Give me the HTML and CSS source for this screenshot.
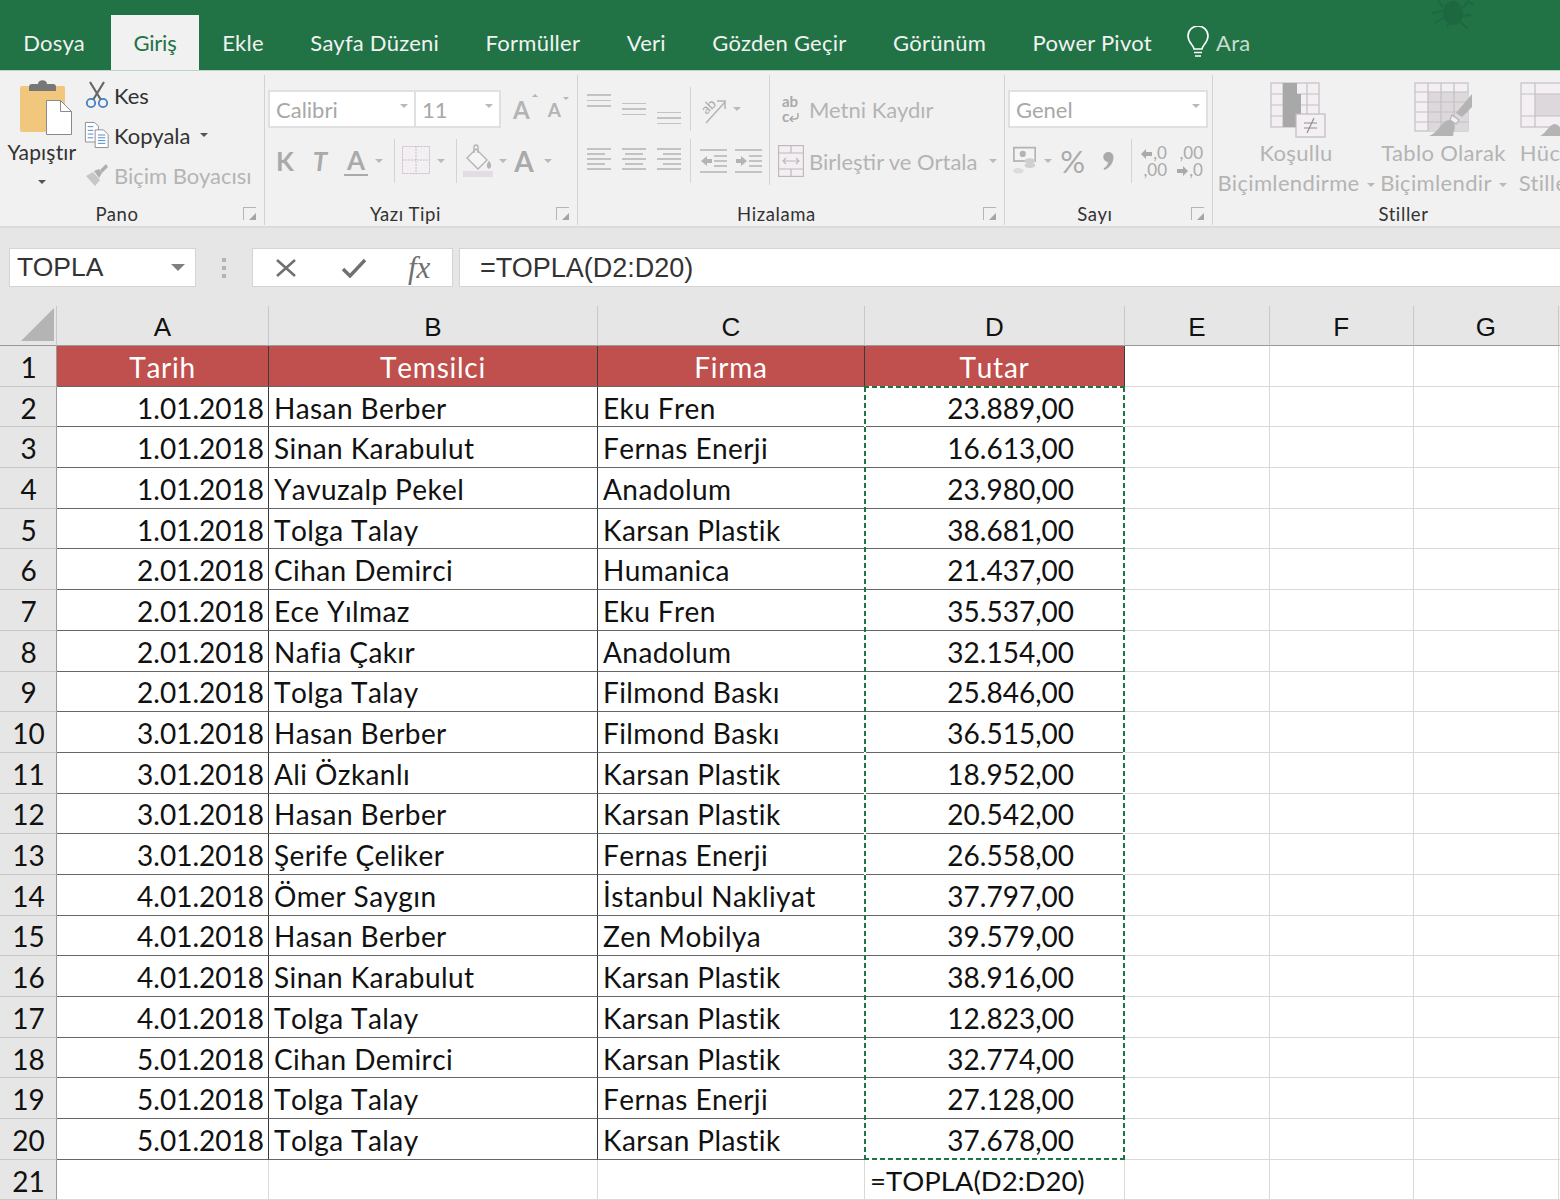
FILE: index.html
```html
<!DOCTYPE html>
<html lang="tr">
<head>
  <meta charset="UTF-8">
  <meta name="viewport" content="width=device-width, initial-scale=1.0">
  <title>Excel - TOPLA</title>
  <link rel="stylesheet" href="styles.css">
</head>
<body>

  <!-- sekmeler -->
  <div class="tabs">
    <div class="tab">Dosya</div>
    <div class="tab active">Giriş</div>
    <div class="tab">Ekle</div>
    <div class="tab">Sayfa Düzeni</div>
    <div class="tab">Formüller</div>
    <div class="tab">Veri</div>
    <div class="tab">Gözden Geçir</div>
    <div class="tab">Görünüm</div>
    <div class="tab">Power Pivot</div>
    <div class="tab search">
      <svg width="24" height="34" viewBox="0 0 24 34" fill="none" stroke="#fff" stroke-width="1.6"><path d="M8 23c0-4-6-6-6-13a10 10 0 0 1 20 0c0 7-6 9-6 13z"/><path d="M8 26.500h8M9 30h6"/></svg>
      <span>Ara</span>
    </div>
    <svg class="crab" width="46" height="30" viewBox="0 0 46 30" fill="none" stroke="#1d6840" stroke-width="2"><ellipse cx="24" cy="13" rx="9" ry="11" fill="#1d6840"/><path d="M15 11 3 13M16 17 6 23M33 16l9-1M30 21l9 8M34 8l5-7 5 4M14 7 9 0M20 23l-2 5"/></svg>
  </div>

  <!-- serit -->
  <div class="ribbon">

    <div class="group pano">
      <div class="group-body">
        <div class="paste">
          <svg width="52" height="55" viewBox="0 0 52 55">
            <rect x="0" y="6" width="45" height="46" rx="2" fill="#f0c77c"/>
            <path d="M9 7c0-2 1-3 3-3h6c0-5 9-5 9 0h6c2 0 3 1 3 3v4H9z" fill="#777"/>
            <path d="M26.500 20.500h14l11 11v23h-25z" fill="#fff" stroke="#8a8a8a"/>
            <path d="M40.500 20.500v11h11" fill="none" stroke="#8a8a8a"/>
          </svg>
          <span class="paste-label">Yapıştır</span>
          <i class="caret dark"></i>
        </div>
        <div class="clip-list">
          <div class="clip-row">
            <svg width="24" height="28" viewBox="0 0 24 28" fill="none"><path d="M5 1l11 18M19 1L8 19" stroke="#666" stroke-width="2.200"/><circle cx="6" cy="22" r="4.200" stroke="#3f7fc1" stroke-width="1.800"/><circle cx="18" cy="22" r="4.200" stroke="#3f7fc1" stroke-width="1.800"/></svg>
            <span>Kes</span>
          </div>
          <div class="clip-row">
            <svg width="28" height="30" viewBox="0 0 28 30" fill="#fff" stroke="#8a8a8a"><path d="M1.500 1.500h10l4 4v17h-14z"/><path d="M12 9.500h9l5 5v14H12z"/><path d="M4 6h6M4 10h6M4 14h6M4 18h6" stroke="#4a86c5"/><path d="M15 15h8M15 18h8M15 21h8M15 24h8" stroke="#4a86c5"/></svg>
            <span>Kopyala</span>
            <i class="caret dark"></i>
          </div>
          <div class="clip-row off">
            <svg width="24" height="24" viewBox="0 0 24 24" fill="#c9c6ca"><path d="M1 13l7-4 7 8-5 6z"/><path d="M9 8l5-2 3 4-3 5z" fill="#b0aeb0"/><path d="M15 7l6-6 2 3-6 6z" fill="#b0aeb0"/></svg>
            <span>Biçim Boyacısı</span>
          </div>
        </div>
      </div>
      <div class="group-label">Pano<i class="launcher"></i></div>
    </div>

    <div class="group font">
      <div class="group-body stack">
        <div class="tool-row">
          <div class="combo font-name">Calibri<i class="caret"></i></div>
          <div class="combo font-size">11<i class="caret"></i></div>
          <span class="grow big">A<i class="up"></i></span>
          <span class="grow small">A<i class="down"></i></span>
        </div>
        <div class="tool-row second">
          <b class="fmt bold">K</b>
          <b class="fmt ital">T</b>
          <b class="fmt und">A</b>
          <i class="caret"></i>
          <i class="sep"></i>
          <svg class="borders" width="28" height="30" viewBox="0 0 28 30" fill="#f3eff3" stroke="#c4c0c4" stroke-dasharray="2 1"><rect x=".5" y=".5" width="27" height="27"/><path d="M14 0v28M0 14h28"/></svg>
          <i class="caret"></i>
          <i class="sep"></i>
          <svg class="fill" width="30" height="34" viewBox="0 0 30 34" fill="#f5f5f5" stroke="#b4b4b4" stroke-width="1.400"><path d="M13 5l11 11-9 9-11-11z"/><path d="M11 9V3a2 2 0 0 1 4 0v6" fill="none"/><path d="M26 18c2 3 2 5 0 6-2-1-2-3 0-6z" fill="#b4b4b4"/><rect x="0" y="27" width="30" height="6" fill="#e2dde2" stroke="none"/></svg>
          <i class="caret"></i>
          <b class="fmt color">A</b>
          <i class="caret"></i>
        </div>
      </div>
      <div class="group-label">Yazı Tipi<i class="launcher"></i></div>
    </div>

    <div class="group align">
      <div class="group-body split">
        <div class="stack">
          <div class="tool-row">
            <span class="lines valign top"><i></i><i></i><i></i></span>
            <span class="lines valign mid"><i></i><i></i><i></i></span>
            <span class="lines valign bot"><i></i><i></i><i></i></span>
            <i class="sep"></i>
            <svg class="orient" width="27" height="30" viewBox="0 0 27 30" fill="none" stroke="#b4b4b4" stroke-width="1.500"><path d="M6 29 25 8M17 7h8v8"/><text x="2" y="18" transform="rotate(-45 8 14)" font-family="Lato, sans-serif" font-size="14" fill="#aaa" stroke="none">ab</text></svg>
            <i class="caret"></i>
          </div>
          <div class="tool-row second">
            <span class="lines halign left"><i></i><i></i><i></i><i></i><i></i></span>
            <span class="lines halign center"><i></i><i></i><i></i><i></i><i></i></span>
            <span class="lines halign right"><i></i><i></i><i></i><i></i><i></i></span>
            <i class="sep"></i>
            <svg class="indent" width="27" height="26" viewBox="0 0 27 26" fill="none" stroke="#b4b4b4" stroke-width="1.500"><path d="M0 2h27M0 24h27M14 8h13M14 13h13M14 18h13"/><path d="M1 13l6-5v3h5v4H7v3z" fill="#b4b4b4" stroke="none"/></svg>
            <svg class="indent" width="27" height="26" viewBox="0 0 27 26" fill="none" stroke="#b4b4b4" stroke-width="1.500"><path d="M0 2h27M0 24h27M14 8h13M14 13h13M14 18h13"/><path d="M12 13 6 8v3H1v4h5v3z" fill="#b4b4b4" stroke="none"/></svg>
          </div>
        </div>
        <div class="stack wrap-col">
          <div class="tool-row off-label">
            <span class="abc">ab<br>c<svg width="10" height="10" viewBox="0 0 10 10" fill="none" stroke="#aaa" stroke-width="1.500"><path d="M9 1v3a3 3 0 0 1-3 3H1M4 4 1 7l3 3"/></svg></span>
            <span>Metni Kaydır</span>
          </div>
          <div class="tool-row second off-label merge">
            <svg width="26" height="32" viewBox="0 0 26 32" fill="#f3eff3" stroke="#c0b8bc" stroke-width="1.200"><rect x=".6" y=".6" width="24.800" height="30.800"/><path d="M0 8h26M0 24h26M13 0v8M13 24v8"/><path d="M5 16h16M8 13l-3 3 3 3M18 13l3 3-3 3" fill="none"/></svg>
            <span>Birleştir ve Ortala</span>
            <i class="caret"></i>
          </div>
        </div>
      </div>
      <div class="group-label">Hizalama<i class="launcher"></i></div>
    </div>

    <div class="group number">
      <div class="group-body stack">
        <div class="tool-row">
          <div class="combo genel">Genel<i class="caret"></i></div>
        </div>
        <div class="tool-row second">
          <svg class="money" width="26" height="32" viewBox="0 0 26 32"><rect x="1" y="1" width="24" height="15" fill="#f3f3f3" stroke="#b4b4b4" stroke-width="2"/><circle cx="11" cy="8" r="3.500" fill="#b4b4b4"/><ellipse cx="19" cy="16" rx="6" ry="3" fill="#cfcfcf"/><ellipse cx="19" cy="21" rx="6" ry="3" fill="#cfcfcf"/><ellipse cx="6" cy="27" rx="6" ry="3" fill="#dcdcdc"/></svg>
          <i class="caret"></i>
          <span class="pct">%</span>
          <svg class="comma" width="11" height="20" viewBox="0 0 11 20" fill="#aaa"><path d="M5.500 1a5 5 0 0 1 5 5c0 6-4 11-9 13l-1-1.500c3-2 4.500-4 4.500-6.500a4.500 4.500 0 0 1 .5-10z"/></svg>
          <i class="sep"></i>
          <span class="dec">
            <span><svg width="11" height="10" viewBox="0 0 11 10" fill="#aaa"><path d="M0 5l5-5v3h6v4H5v3z"/></svg>,0</span>
            <span>,00</span>
          </span>
          <span class="dec">
            <span>,00</span>
            <span><svg width="11" height="10" viewBox="0 0 11 10" fill="#aaa"><path d="M11 5 6 0v3H0v4h6v3z"/></svg>,0</span>
          </span>
        </div>
      </div>
      <div class="group-label">Sayı<i class="launcher"></i></div>
    </div>

    <div class="group styles">
      <div class="group-body gallery">
        <div class="style-btn cond">
          <svg width="56" height="56" viewBox="0 0 56 56" fill="#f3eff3" stroke="#c4c0c4" stroke-width="1.200">
            <rect x="1" y="1" width="48" height="44"/>
            <path d="M1 12h48M1 23h48M1 34h48M13 1v44M25 1v44M37 1v44"/>
            <path d="M13 1h14v11h4v22h-4v11H13z" fill="#a9a8a9" stroke="none"/>
            <rect x="26" y="32" width="29" height="23" fill="#f3eff3" stroke="#bfbbbf"/>
            <path d="M34 41h13M34 46h13M44 36l-7 15" fill="none" stroke="#8f8f8f"/>
          </svg>
          <span>Koşullu</span>
          <span>Biçimlendirme<i class="caret"></i></span>
        </div>
        <div class="style-btn table">
          <svg width="60" height="56" viewBox="0 0 60 56" fill="#f3eff3" stroke="#c4c0c4" stroke-width="1.200">
            <rect x="1" y="1" width="53" height="48"/>
            <rect x="14" y="10" width="40" height="39" fill="#dcd8dc" stroke="none"/>
            <path d="M1 10h53M1 20h53M1 30h53M1 40h53M14 1v48M27 1v48M40 1v48"/>
            <path d="M58 12v13L48 35l-6-4z" fill="#b4b4b4" stroke="none"/>
            <path d="M38 33l7 5-3 4-6-4z" fill="#f3eff3" stroke="#b4b4b4"/>
            <path d="M34 38c5 1 8 5 6 10l-1 6H15c9-3 12-14 19-16z" fill="#b4b4b4" stroke="none"/>
          </svg>
          <span>Tablo Olarak</span>
          <span>Biçimlendir<i class="caret"></i></span>
        </div>
        <div class="style-btn cell-st">
          <svg width="60" height="56" viewBox="0 0 60 56" fill="#f3eff3" stroke="#c4c0c4" stroke-width="1.200">
            <rect x="1" y="1" width="50" height="44"/>
            <rect x="15" y="12" width="36" height="22" fill="#dcd8dc" stroke="none"/>
            <path d="M1 12h50M1 34h50M15 1v44"/>
            <path d="M20 54c6-3 8-10 14-12 5 0 8 5 6 12z" fill="#b4b4b4" stroke="none"/>
          </svg>
          <span>Hücre</span>
          <span>Stilleri</span>
        </div>
      </div>
      <div class="group-label">Stiller</div>
    </div>
  </div>

  <!-- formul cubugu -->
  <div class="formula-bar">
    <div class="name-box">TOPLA<i class="caret dark"></i></div>
    <div class="grip"><i></i><i></i><i></i></div>
    <div class="fx-box">
      <svg width="24" height="20" viewBox="0 0 24 20" fill="none" stroke="#707070" stroke-width="2.600"><path d="M3 2l18 16M21 2 3 18"/></svg>
      <svg width="26" height="20" viewBox="0 0 26 20" fill="none" stroke="#707070" stroke-width="3.400"><path d="M2 11l7 7L24 2"/></svg>
      <span class="fx">fx</span>
    </div>
    <div class="formula-input">=TOPLA(D2:D20)</div>
  </div>

  <!-- tablo -->
  <div class="sheet">
    <div class="row heads">
      <div class="corner"><i></i></div>
      <div class="cell">A</div><div class="cell">B</div><div class="cell">C</div><div class="cell">D</div>
      <div class="cell">E</div><div class="cell">F</div><div class="cell">G</div><div class="cell"></div>
    </div>

    <div class="row title">
      <div class="num">1</div>
      <div class="cell">Tarih</div><div class="cell">Temsilci</div><div class="cell">Firma</div><div class="cell">Tutar</div>
      <div class="cell e"></div><div class="cell e"></div><div class="cell e"></div><div class="cell e"></div>
    </div>

    <div class="row data"><div class="num">2</div><div class="cell date">1.01.2018</div><div class="cell">Hasan Berber</div><div class="cell">Eku Fren</div><div class="cell amount">23.889,00</div><div class="cell e"></div><div class="cell e"></div><div class="cell e"></div><div class="cell e"></div></div>
    <div class="row data"><div class="num">3</div><div class="cell date">1.01.2018</div><div class="cell">Sinan Karabulut</div><div class="cell">Fernas Enerji</div><div class="cell amount">16.613,00</div><div class="cell e"></div><div class="cell e"></div><div class="cell e"></div><div class="cell e"></div></div>
    <div class="row data"><div class="num">4</div><div class="cell date">1.01.2018</div><div class="cell">Yavuzalp Pekel</div><div class="cell">Anadolum</div><div class="cell amount">23.980,00</div><div class="cell e"></div><div class="cell e"></div><div class="cell e"></div><div class="cell e"></div></div>
    <div class="row data"><div class="num">5</div><div class="cell date">1.01.2018</div><div class="cell">Tolga Talay</div><div class="cell">Karsan Plastik</div><div class="cell amount">38.681,00</div><div class="cell e"></div><div class="cell e"></div><div class="cell e"></div><div class="cell e"></div></div>
    <div class="row data"><div class="num">6</div><div class="cell date">2.01.2018</div><div class="cell">Cihan Demirci</div><div class="cell">Humanica</div><div class="cell amount">21.437,00</div><div class="cell e"></div><div class="cell e"></div><div class="cell e"></div><div class="cell e"></div></div>
    <div class="row data"><div class="num">7</div><div class="cell date">2.01.2018</div><div class="cell">Ece Yılmaz</div><div class="cell">Eku Fren</div><div class="cell amount">35.537,00</div><div class="cell e"></div><div class="cell e"></div><div class="cell e"></div><div class="cell e"></div></div>
    <div class="row data"><div class="num">8</div><div class="cell date">2.01.2018</div><div class="cell">Nafia Çakır</div><div class="cell">Anadolum</div><div class="cell amount">32.154,00</div><div class="cell e"></div><div class="cell e"></div><div class="cell e"></div><div class="cell e"></div></div>
    <div class="row data"><div class="num">9</div><div class="cell date">2.01.2018</div><div class="cell">Tolga Talay</div><div class="cell">Filmond Baskı</div><div class="cell amount">25.846,00</div><div class="cell e"></div><div class="cell e"></div><div class="cell e"></div><div class="cell e"></div></div>
    <div class="row data"><div class="num">10</div><div class="cell date">3.01.2018</div><div class="cell">Hasan Berber</div><div class="cell">Filmond Baskı</div><div class="cell amount">36.515,00</div><div class="cell e"></div><div class="cell e"></div><div class="cell e"></div><div class="cell e"></div></div>
    <div class="row data"><div class="num">11</div><div class="cell date">3.01.2018</div><div class="cell">Ali Özkanlı</div><div class="cell">Karsan Plastik</div><div class="cell amount">18.952,00</div><div class="cell e"></div><div class="cell e"></div><div class="cell e"></div><div class="cell e"></div></div>
    <div class="row data"><div class="num">12</div><div class="cell date">3.01.2018</div><div class="cell">Hasan Berber</div><div class="cell">Karsan Plastik</div><div class="cell amount">20.542,00</div><div class="cell e"></div><div class="cell e"></div><div class="cell e"></div><div class="cell e"></div></div>
    <div class="row data"><div class="num">13</div><div class="cell date">3.01.2018</div><div class="cell">Şerife Çeliker</div><div class="cell">Fernas Enerji</div><div class="cell amount">26.558,00</div><div class="cell e"></div><div class="cell e"></div><div class="cell e"></div><div class="cell e"></div></div>
    <div class="row data"><div class="num">14</div><div class="cell date">4.01.2018</div><div class="cell">Ömer Saygın</div><div class="cell">İstanbul Nakliyat</div><div class="cell amount">37.797,00</div><div class="cell e"></div><div class="cell e"></div><div class="cell e"></div><div class="cell e"></div></div>
    <div class="row data"><div class="num">15</div><div class="cell date">4.01.2018</div><div class="cell">Hasan Berber</div><div class="cell">Zen Mobilya</div><div class="cell amount">39.579,00</div><div class="cell e"></div><div class="cell e"></div><div class="cell e"></div><div class="cell e"></div></div>
    <div class="row data"><div class="num">16</div><div class="cell date">4.01.2018</div><div class="cell">Sinan Karabulut</div><div class="cell">Karsan Plastik</div><div class="cell amount">38.916,00</div><div class="cell e"></div><div class="cell e"></div><div class="cell e"></div><div class="cell e"></div></div>
    <div class="row data"><div class="num">17</div><div class="cell date">4.01.2018</div><div class="cell">Tolga Talay</div><div class="cell">Karsan Plastik</div><div class="cell amount">12.823,00</div><div class="cell e"></div><div class="cell e"></div><div class="cell e"></div><div class="cell e"></div></div>
    <div class="row data"><div class="num">18</div><div class="cell date">5.01.2018</div><div class="cell">Cihan Demirci</div><div class="cell">Karsan Plastik</div><div class="cell amount">32.774,00</div><div class="cell e"></div><div class="cell e"></div><div class="cell e"></div><div class="cell e"></div></div>
    <div class="row data"><div class="num">19</div><div class="cell date">5.01.2018</div><div class="cell">Tolga Talay</div><div class="cell">Fernas Enerji</div><div class="cell amount">27.128,00</div><div class="cell e"></div><div class="cell e"></div><div class="cell e"></div><div class="cell e"></div></div>
    <div class="row data"><div class="num">20</div><div class="cell date">5.01.2018</div><div class="cell">Tolga Talay</div><div class="cell">Karsan Plastik</div><div class="cell amount">37.678,00</div><div class="cell e"></div><div class="cell e"></div><div class="cell e"></div><div class="cell e"></div></div>

    <div class="row last">
      <div class="num">21</div>
      <div class="cell e"></div><div class="cell e"></div><div class="cell e"></div><div class="cell e sum">=TOPLA(D2:D20)</div>
      <div class="cell e"></div><div class="cell e"></div><div class="cell e"></div><div class="cell e"></div>
    </div>

    <div class="marquee"></div>
  </div>

</body>
</html>
```

FILE: styles.css
```css
* {
  box-sizing: border-box;
}

html, body {
  margin: 0;
  height: 1200px;
  overflow: hidden;
}

body {
  font-family: 'Lato', 'Open Sans', sans-serif;
  background-color: #e6e6e6;
  color: #222;
}

i {
  font-style: normal;
}

/* sekmeler */
.tabs {
  position: relative;
  display: flex;
  height: 70px;
  padding-top: 15px;
  background-color: #217346;
  color: #f2f2f2;
  font-size: 22px;
  letter-spacing: .25px;
}

.tab {
  display: flex;
  align-items: center;
  height: 55px;
  padding: 0 23.250px;
}

.tab:first-child {
  padding-right: 26px;
}

.tab.active {
  padding: 0 22.500px;
  background-color: #f1f1f1;
  color: #217346;
  letter-spacing: -.2px;
}

.search {
  gap: 6px;
  padding-left: 11px;
  color: #c9dcd1;
}

.crab {
  position: absolute;
  top: 0;
  left: 1429px;
}

/* serit */
.ribbon {
  display: flex;
  height: 158px;
  background-color: #f1f1f1;
  border-top: 1px solid #bcd3c6;
  border-bottom: 2px solid #dadada;
  overflow: hidden;
}

.group {
  display: flex;
  flex-direction: column;
  flex-shrink: 0;
  height: 150px;
  margin-top: 4px;
  border-right: 1px solid #d2d2d2;
}

.group-body {
  flex: 1;
  min-height: 0;
}

.group-label {
  position: relative;
  flex-shrink: 0;
  height: 34px;
  padding-top: 12px;
  text-align: center;
  font-size: 18.500px;
  letter-spacing: .6px;
  color: #333;
}

.launcher {
  position: absolute;
  top: 16px;
  right: 8px;
  width: 13px;
  height: 13px;
  border-top: 1px solid #b5b5b5;
  border-left: 1px solid #b5b5b5;
}

.launcher::after {
  content: "";
  position: absolute;
  right: 0;
  bottom: 0;
  border-left: 7px solid transparent;
  border-bottom: 7px solid #a5a5a5;
}

.caret {
  display: inline-block;
  flex-shrink: 0;
  width: 0;
  height: 0;
  border-left: 4px solid transparent;
  border-right: 4px solid transparent;
  border-top: 4px solid #b9b9b9;
}

.caret.dark {
  border-top-color: #555;
}

.sep {
  display: block;
  flex-shrink: 0;
  width: 1px;
  height: 44px;
  background-color: #d4d4d4;
}

/* pano */
.pano {
  width: 265px;
}

.pano .group-body {
  display: flex;
  padding-left: 5px;
}

.pano .group-label {
  padding-right: 30px;
}

.paste {
  display: flex;
  flex-direction: column;
  align-items: center;
  width: 74px;
  padding-top: 5px;
  font-size: 21px;
  letter-spacing: .2px;
  color: #333;
}

.paste svg {
  flex-shrink: 0;
  margin-left: 8px;
}

.paste-label {
  margin-top: 4px;
  line-height: 26px;
}

.paste .caret {
  margin-top: 15px;
}

.clip-list {
  display: flex;
  flex-direction: column;
  gap: 10px;
  margin-left: 5px;
  padding-top: 5px;
}

.clip-row {
  display: flex;
  align-items: center;
  gap: 4px;
  height: 30px;
  font-size: 22px;
  color: #333;
}

.clip-row svg {
  flex: 0 0 auto;
  width: 26px;
}

.clip-row .caret {
  margin-left: 6px;
}

.clip-row.off {
  color: #b4b4b4;
}

/* yazi tipi */
.font {
  width: 313px;
  padding-left: 3px;
}

.font .group-label {
  padding-right: 34px;
}

.stack {
  display: flex;
  flex-direction: column;
}

.tool-row {
  display: flex;
  align-items: center;
  flex-shrink: 0;
  height: 38px;
  margin-top: 15px;
}

.tool-row.second {
  height: 44px;
  margin-top: 11px;
}

.combo {
  display: flex;
  align-items: center;
  justify-content: space-between;
  height: 38px;
  padding: 0 6px;
  background-color: #fff;
  border: 2px solid #e0e0e0;
  font-size: 22px;
  color: #a8a8a8;
}

.combo .caret {
  margin-bottom: 6px;
}

.font-name {
  width: 148px;
}

.font-size {
  width: 85px;
  border-left: 0;
}

.grow {
  position: relative;
  color: #b4b4b4;
  font-weight: 700;
}

.grow.big {
  margin-left: 12px;
  font-size: 24px;
}

.grow.small {
  margin-left: 18px;
  font-size: 19px;
}

.grow i {
  position: absolute;
  top: -1px;
  right: -8px;
  border-left: 3px solid transparent;
  border-right: 3px solid transparent;
}

.up {
  border-bottom: 3px solid #b4b4b4;
}

.down {
  border-top: 3px solid #b4b4b4;
}

.fmt {
  width: 24px;
  text-align: center;
  font-size: 26px;
  color: #aaa;
}

.font .bold {
  margin-left: 5px;
}

.font .ital {
  margin-left: 11px;
  font-style: italic;
}

.font .und {
  margin-left: 12px;
  border-bottom: 2px solid #aaa;
  line-height: 27px;
}

.font .und + .caret {
  margin-left: 7px;
}

.font .second .sep {
  margin: 0 6px 0 11px;
}

.borders {
  margin: 0 0 0 1px;
}

.borders + .caret {
  margin-left: 7px;
}

.fill {
  margin-left: 0;
}

.fill + .caret {
  margin-left: 6px;
}

.font .color {
  margin-left: 5px;
  font-size: 28px;
}

.font .color + .caret {
  margin-left: 8px;
}

/* hizalama */
.align {
  width: 427px;
  padding-left: 9px;
}

.align .group-label {
  padding-right: 38px;
}

.split {
  display: flex;
}

.lines {
  display: flex;
  flex-direction: column;
  width: 24px;
}

.lines i {
  display: block;
  width: 100%;
  height: 1.500px;
  background-color: #c2c2c2;
}

.valign {
  gap: 4px;
  height: 30px;
  margin-right: 11px;
}

.valign.top {
  justify-content: flex-start;
}

.valign.mid {
  justify-content: center;
}

.valign.bot {
  justify-content: flex-end;
}

.halign {
  gap: 3.500px;
  height: 26px;
  margin-right: 11px;
}

.halign i:nth-child(even) {
  width: 75%;
}

.halign.center {
  align-items: center;
}

.halign.right {
  align-items: flex-end;
}

.align .sep {
  margin: 0 9px 0 -2px;
}

.orient {
  overflow: visible;
}

.orient + .caret {
  margin-left: 6px;
}

.indent {
  margin-right: 8px;
}

.wrap-col {
  flex-shrink: 0;
  height: 110px;
  margin-left: -1px;
  padding-left: 8px;
  border-left: 1px solid #d4d4d4;
}

.off-label {
  gap: 8px;
  font-size: 22px;
  color: #b4b4b4;
  white-space: nowrap;
}

.abc {
  width: 19px;
  margin-left: 4px;
  font-size: 15px;
  font-weight: 700;
  line-height: 15px;
  color: #aaa;
}

.merge {
  gap: 5px;
}

.merge .caret {
  margin-left: 7px;
}

/* sayi */
.number {
  width: 208px;
  padding-left: 3px;
}

.number .group-label {
  padding-right: 30px;
}

.genel {
  width: 200px;
}

.money {
  margin-left: 5px;
}

.money + .caret {
  margin-left: 8px;
}

.pct {
  margin-left: 8px;
  font-size: 31px;
  color: #aaa;
}

.comma {
  flex-shrink: 0;
  margin: 0 17px 0 18px;
}

.number .sep {
  flex-shrink: 0;
  margin-right: 8px;
}

.dec {
  display: flex;
  flex-direction: column;
  align-items: flex-end;
  flex-shrink: 0;
  width: 27px;
  margin-right: 9px;
  font-size: 17px;
  line-height: 17px;
  color: #aaa;
}

.dec svg {
  margin-right: 1px;
}

/* stiller */
.styles {
  flex: 1;
  width: 350px;
  border-right: 0;
}

.gallery {
  display: flex;
  align-items: flex-start;
  padding-left: 2px;
}

.style-btn {
  display: flex;
  flex-direction: column;
  align-items: center;
  flex-shrink: 0;
  padding-top: 7px;
  font-size: 22px;
  letter-spacing: .35px;
  line-height: 30px;
  color: #b4b4b4;
  white-space: nowrap;
}

.style-btn svg {
  flex-shrink: 0;
}

.style-btn .caret {
  margin-left: 7px;
  margin-bottom: 4px;
}

.cond {
  width: 162px;
}

.cond svg {
  margin-left: 4px;
}

.table {
  width: 133px;
}

.cell-st {
  width: 80px;
}

.styles .group-label {
  width: 381px;
}

/* formul cubugu */
.formula-bar {
  display: flex;
  align-items: stretch;
  height: 39px;
  margin-top: 20px;
  margin-left: 9px;
  font-family: 'Liberation Sans', Arial, sans-serif;
  font-size: 26.500px;
  color: #333;
}

.name-box {
  display: flex;
  align-items: center;
  justify-content: space-between;
  width: 187px;
  padding: 0 10px 0 7px;
  background-color: #fff;
  border: 1px solid #d4d4d4;
}

.name-box .caret {
  border-left-width: 7px;
  border-right-width: 7px;
  border-top-width: 7px;
  border-top-color: #808080;
}

.grip {
  display: flex;
  flex-direction: column;
  justify-content: center;
  gap: 4px;
  width: 56px;
  padding-left: 26px;
}

.grip i {
  display: block;
  width: 4px;
  height: 4px;
  background-color: #b4b4b4;
}

.fx-box {
  display: flex;
  align-items: center;
  width: 201px;
  padding-left: 21px;
  background-color: #fff;
  border: 1px solid #d4d4d4;
}

.fx-box svg + svg {
  margin-left: 43px;
}

.fx {
  margin-left: 41px;
  font-family: 'Liberation Serif', serif;
  font-style: italic;
  font-size: 31px;
  color: #707070;
}

.formula-input {
  flex: 1;
  display: flex;
  align-items: center;
  margin-left: 6px;
  padding: 2px 0 0 20px;
  background-color: #fff;
  border: 1px solid #d4d4d4;
  border-right: 0;
  font-size: 27px;
}

/* tablo */
.sheet {
  position: relative;
  display: grid;
  grid-template-rows: 40px repeat(21, 40.700px);
  margin-top: 19px;
  font-size: 28px;
  color: #111;
}

.row {
  display: grid;
  grid-template-columns: 57px 212px 329px 267px 260px 145px 144px 145px 1fr;
}

.cell {
  display: flex;
  align-items: center;
  min-width: 0;
  padding: 2px 5px 0 5px;
  font-kerning: none;
  letter-spacing: .4px;
  white-space: nowrap;
}

.data .cell,
.title .cell {
  background-color: #fff;
  border-right: 1px solid #3c3c3c;
  border-bottom: 1px solid #666;
}

.row .cell.e {
  background-color: #fff;
  border-right: 1px solid #d9d9d9;
  border-bottom: 1px solid #d9d9d9;
}

.heads .cell {
  justify-content: center;
  padding-top: 3px;
  border-right: 1px solid #c8c8c8;
  border-bottom: 1px solid #9a9a9a;
  font-family: 'Liberation Sans', Arial, sans-serif;
  font-size: 26px;
}

.corner {
  position: relative;
  border-right: 1px solid #c8c8c8;
  border-bottom: 1px solid #9a9a9a;
}

.corner i {
  position: absolute;
  right: 2px;
  bottom: 4px;
  border-left: 33px solid transparent;
  border-bottom: 33px solid #b4b4b4;
}

.num {
  display: flex;
  align-items: center;
  justify-content: center;
  padding: 2px 0 0 1px;
  border-right: 1px solid #9a9a9a;
  border-bottom: 1px solid #c8c8c8;
  background-color: #e6e6e6;
}

.title .cell {
  justify-content: center;
  background-color: #c0504d;
  color: #fff;
  letter-spacing: .75px;
}

.date {
  justify-content: flex-end;
  padding-right: 4px;
  letter-spacing: 0;
}

.amount {
  justify-content: flex-end;
  padding-right: 50px;
  letter-spacing: 0;
}

.sum {
  font-size: 27.500px;
  letter-spacing: 0;
}

.marquee {
  position: absolute;
  top: 80px;
  left: 864px;
  width: 261px;
  height: 774px;
  background-image:
    repeating-linear-gradient(90deg, #217346 0 5px, #fff 5px 8px),
    repeating-linear-gradient(90deg, #217346 0 5px, #fff 5px 8px),
    repeating-linear-gradient(0deg, #217346 0 5px, #fff 5px 8px),
    repeating-linear-gradient(0deg, #217346 0 5px, #fff 5px 8px);
  background-size: 100% 2px, 100% 2px, 2px 100%, 2px 100%;
  background-position: top, bottom, left, right;
  background-repeat: no-repeat;
}
```
